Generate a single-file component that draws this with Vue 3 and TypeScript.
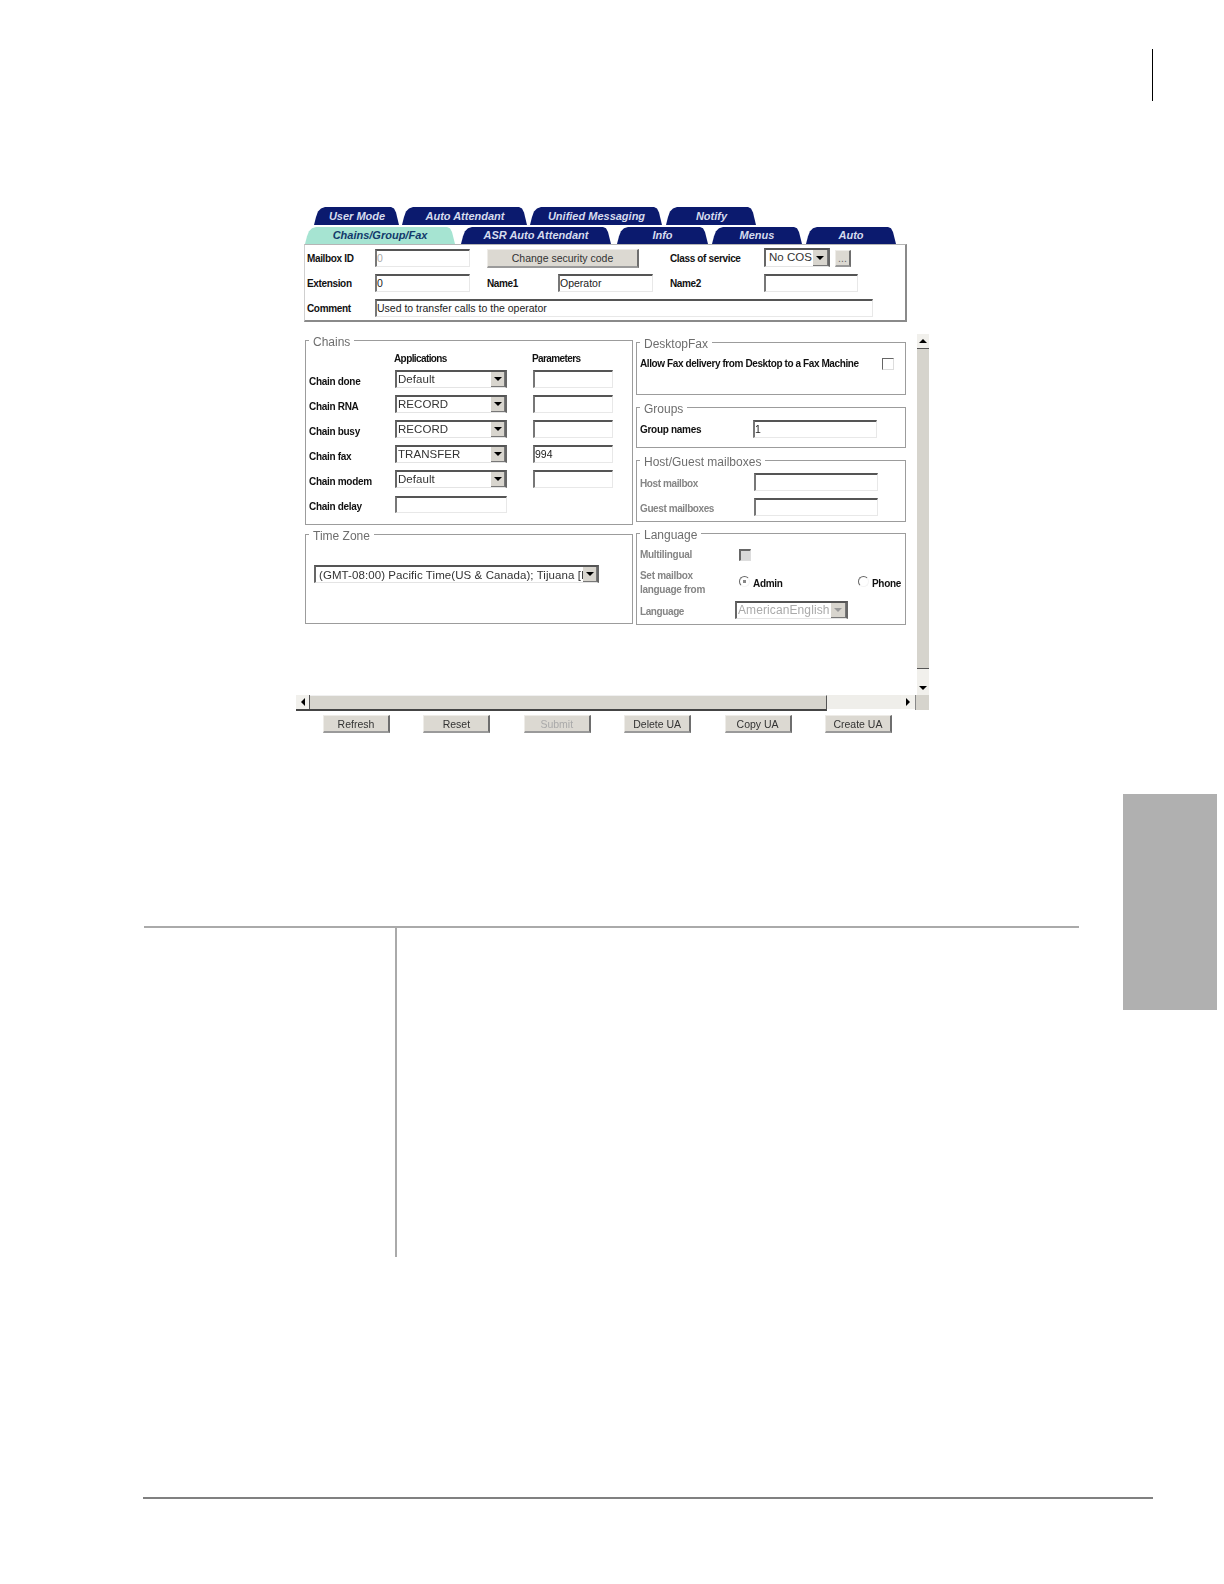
<script setup lang="ts">
interface Tab { label: string; width: number; gap: number; active?: boolean }
const upperTabs: Tab[] = [
  { label: 'User Mode', width: 86, gap: 0 },
  { label: 'Auto Attendant', width: 126, gap: 2 },
  { label: 'Unified Messaging', width: 133, gap: 2 },
  { label: 'Notify', width: 91, gap: 3 },
]
const lowerTabs: Tab[] = [
  { label: 'Chains/Group/Fax', width: 151, gap: 0, active: true },
  { label: 'ASR Auto Attendant', width: 151, gap: 5 },
  { label: 'Info', width: 92, gap: 5 },
  { label: 'Menus', width: 91, gap: 3 },
  { label: 'Auto', width: 91, gap: 3 },
]
const chains = [
  { label: 'Chain done', app: 'Default', param: '' },
  { label: 'Chain RNA', app: 'RECORD', param: '' },
  { label: 'Chain busy', app: 'RECORD', param: '' },
  { label: 'Chain fax', app: 'TRANSFER', param: '994' },
  { label: 'Chain modem', app: 'Default', param: '' },
]
const actions = ['Refresh', 'Reset', 'Submit', 'Delete UA', 'Copy UA', 'Create UA']
</script>

<template>
  <div class="page">
    <div class="crop-bar"></div>
    <div class="side-thumb"></div>

    <section class="window">
      <div class="tab-row upper">
        <div v-for="t in upperTabs" :key="t.label" class="tab" :style="{ width: t.width + 'px', marginLeft: t.gap + 'px' }">{{ t.label }}</div>
      </div>
      <div class="tab-row lower">
        <div v-for="t in lowerTabs" :key="t.label" class="tab" :class="{ active: t.active }" :style="{ width: t.width + 'px', marginLeft: t.gap + 'px' }">{{ t.label }}</div>
      </div>

      <div class="panel">
        <label class="lbl first">Mailbox ID</label>
        <input class="field w95 muted" value="0" readonly />
        <button class="btn security">Change security code</button>
        <label class="lbl">Class of service</label>
        <div class="cos">
          <div class="sel cos-sel"><span>No COS</span><i class="arrow-btn"><b></b></i></div>
          <button class="btn dots">...</button>
        </div>

        <label class="lbl first">Extension</label>
        <input class="field w95" value="0" readonly />
        <label class="lbl">Name1</label>
        <input class="field w95" value="Operator" readonly />
        <label class="lbl">Name2</label>
        <input class="field w94" readonly />

        <label class="lbl first">Comment</label>
        <input class="field comment" value="Used to transfer calls to the operator" readonly />
      </div>

      <div class="main">
        <div class="col-left">
          <fieldset class="fs chains">
            <legend>Chains</legend>
            <div class="chains-grid">
              <span></span>
              <span class="lbl head">Applications</span>
              <span class="lbl head">Parameters</span>
              <template v-for="c in chains" :key="c.label">
                <label class="lbl chain-lbl">{{ c.label }}</label>
                <div class="sel app"><span>{{ c.app }}</span><i class="arrow-btn"><b></b></i></div>
                <input class="field param" :value="c.param" readonly />
              </template>
              <label class="lbl chain-lbl">Chain delay</label>
              <input class="field delay" readonly />
            </div>
          </fieldset>
          <fieldset class="fs zone">
            <legend>Time Zone</legend>
            <div class="sel zone-sel"><span>(GMT-08:00) Pacific Time(US &amp; Canada); Tijuana [I</span><i class="arrow-btn"><b></b></i></div>
          </fieldset>
        </div>

        <div class="col-right">
          <fieldset class="fs desktop">
            <legend>DesktopFax</legend>
            <div class="desktop-row">
              <label class="lbl fax-lbl">Allow Fax delivery from Desktop to a Fax Machine</label>
              <i class="check"></i>
            </div>
          </fieldset>
          <fieldset class="fs groups">
            <legend>Groups</legend>
            <div class="pair-grid group-grid">
              <label class="lbl nudge">Group names</label>
              <input class="field w124" value="1" readonly />
            </div>
          </fieldset>
          <fieldset class="fs host">
            <legend>Host/Guest mailboxes</legend>
            <div class="pair-grid host-grid">
              <label class="lbl dim host-lbl">Host mailbox</label>
              <input class="field w124" readonly />
              <label class="lbl dim host-lbl">Guest mailboxes</label>
              <input class="field w124" readonly />
            </div>
          </fieldset>
          <fieldset class="fs language">
            <legend>Language</legend>
            <div class="lang-grid">
              <label class="lbl dim">Multilingual</label>
              <i class="check disabled"></i>
              <label class="lbl dim two-line">Set mailbox<br />language from</label>
              <div class="radios">
                <span class="radio-item"><i class="radio on"></i><b>Admin</b></span>
                <span class="radio-item"><i class="radio"></i><b>Phone</b></span>
              </div>
              <label class="lbl dim lang-lbl">Language</label>
              <div class="sel lang-sel"><span>AmericanEnglish</span><i class="arrow-btn off"><b></b></i></div>
            </div>
          </fieldset>
        </div>

        <div class="vscroll">
          <i class="sb-btn"><b class="up"></b></i>
          <div class="v-thumb"></div>
          <div class="v-track"></div>
          <i class="sb-btn"><b class="down"></b></i>
        </div>
      </div>

      <div class="hscroll">
        <i class="sb-btn wide"><b class="left"></b></i>
        <div class="h-thumb"></div>
        <div class="h-track"></div>
        <i class="sb-btn wide"><b class="right"></b></i>
        <div class="h-corner"></div>
      </div>

      <div class="actions">
        <button v-for="a in actions" :key="a" class="btn action" :class="{ disabled: a === 'Submit' }">{{ a }}</button>
      </div>
    </section>

    <div class="rule-table"><div class="rule-v"></div></div>
    <div class="rule-foot"></div>
  </div>
</template>

<style>
html, body { margin: 0; background: #fff; }
</style>

<style scoped>
.page {
  position: relative;
  width: 1224px;
  height: 1584px;
  overflow: hidden;
  background: #fff;
  font-family: "Liberation Sans", Arial, sans-serif;
  display: flow-root;
}
.crop-bar { margin: 49px 0 0 1152px; width: 1.4px; height: 52px; background: #000; }
.side-thumb { position: absolute; left: 1123px; top: 794px; width: 94px; height: 216px; background: #b0b0b0; }

.window { margin: 106px 0 0 296px; width: 633px; filter: blur(0.45px); }

.tab-row { display: flex; }
.upper { height: 18px; padding-left: 18px; margin-bottom: 2px; }
.lower { height: 17px; padding-left: 9px; }
.tab {
  box-sizing: border-box;
  background: #0b1a6e;
  color: #d6dcee;
  font: italic bold 11px/18px "Liberation Sans", Arial, sans-serif;
  text-align: center;
  clip-path: polygon(0 100%, 2px 55%, 4px 25%, 7px 8%, 11px 0, calc(100% - 9px) 0, calc(100% - 6px) 8%, calc(100% - 4px) 30%, calc(100% - 1px) 100%);
}
.lower .tab { line-height: 16px; padding-right: 1px; }
.tab.active { background: #a6e4d2; color: #123a6b; }

.panel {
  box-sizing: border-box;
  margin-left: 8px;
  width: 603px;
  height: 78px;
  padding-top: 4px;
  background: #fff;
  border-top: 1px solid #b5b5b5;
  border-left: 1px solid #cfcfcf;
  border-right: 2px solid #8a8a8a;
  border-bottom: 2px solid #8a8a8a;
  display: grid;
  grid-template-columns: 70px 112px 71px 112px 94px 1fr;
  grid-template-rows: 18px 18px 18px;
  row-gap: 7px;
  align-items: center;
}

.lbl {
  font: bold 10px/14px "Liberation Sans", Arial, sans-serif;
  letter-spacing: -0.3px;
  color: #111;
  white-space: nowrap;
}
.panel > .lbl { padding-top: 2px; letter-spacing: -0.35px; }
.panel > .first { padding-left: 2px; }
.dim { color: #858585; }
.nudge { padding-top: 1px; }
.chain-lbl { padding-top: 5px; }
.host-lbl { padding-top: 4px; letter-spacing: -0.4px; }
.lang-lbl { padding-top: 5px; letter-spacing: -0.4px; }
.fax-lbl { letter-spacing: -0.4px; }

.field {
  box-sizing: border-box;
  height: 18px;
  padding: 0 0 2px 0;
  margin: 0;
  background: #fff;
  border-style: solid;
  border-width: 2px 1px 1px 2px;
  border-color: #555 #e8e8e8 #e8e8e8 #777;
  font: 10.5px "Liberation Sans", Arial, sans-serif;
  color: #222;
  outline: none;
  border-radius: 0;
}
.muted { color: #aaa; }
.w95 { width: 95px; }
.w94 { width: 94px; }
.w124 { width: 124px; }
.comment { grid-column: 2 / 7; width: 498px; }

.btn {
  box-sizing: border-box;
  margin: 0;
  padding: 0;
  background: #dcd9d2;
  border-top: 1px solid #eeece8;
  border-left: 1px solid #eeece8;
  border-right: 2px solid #6e6e6e;
  border-bottom: 2px solid #9a9a9a;
  font: 10.5px "Liberation Sans", Arial, sans-serif;
  color: #333;
}
.security { grid-column: 3 / 5; width: 152px; height: 19px; }
.cos { display: flex; gap: 5px; align-items: flex-start; margin-top: -1px; }
.dots { width: 16px; height: 17px; margin-top: 2px; color: #666; line-height: 10px; }

.sel {
  box-sizing: border-box;
  height: 18px;
  display: flex;
  align-items: center;
  background: #fff;
  border-style: solid;
  border-width: 2px 2px 1px 2px;
  border-color: #555 #666 #e4e4e4 #666;
  font: 11.5px "Liberation Sans", Arial, sans-serif;
  color: #333;
  padding-left: 1px;
  white-space: nowrap;
}
.sel span { flex: 1; min-width: 0; padding-bottom: 2px; }
.arrow-btn {
  flex: none;
  width: 14px;
  height: 100%;
  background: #d8d5ce;
  border-right: 1px solid #777;
  border-bottom: 1px solid #777;
  box-sizing: border-box;
  display: flex;
  align-items: center;
  justify-content: center;
}
.arrow-btn b { width: 0; height: 0; border: 4px solid transparent; border-top: 4px solid #000; border-bottom: 0; }
.arrow-btn.off b { border-top-color: #999; }
.cos-sel { width: 66px; height: 19px; font-size: 11.5px; padding-left: 3px; }
.cos-sel .arrow-btn { width: 15px; }
.app { width: 112px; letter-spacing: 0.05px; }
.param { width: 80px; }
.delay { width: 112px; height: 17px; }

.main { display: flex; height: 362px; margin-top: 11px; padding-left: 9px; box-sizing: border-box; }
.col-left { width: 328px; }
.col-right { width: 270px; margin-left: 3px; padding-top: 2px; }

.fs {
  box-sizing: border-box;
  margin: 0;
  padding: 0;
  min-width: 0;
  width: 100%;
  border: 1px solid #9c9c9c;
}
.fs legend {
  position: relative;
  top: 1.5px;
  margin-left: 3px;
  padding: 0 4px;
  font: 12px/14px "Liberation Sans", Arial, sans-serif;
  color: #6e6e6e;
}
.chains { height: 192px; }
.zone { height: 97px; margin-top: 2px; }
.desktop { height: 60px; }
.groups { height: 48px; margin-top: 5px; }
.host { height: 69px; margin-top: 5px; }
.language { height: 99px; margin-top: 4px; }

.chains-grid {
  display: grid;
  grid-template-columns: 86px 138px 1fr;
  grid-template-rows: 9px repeat(6, 18px);
  row-gap: 7px;
  padding: 7px 0 0 3px;
  align-items: center;
}
.head { letter-spacing: -0.6px; margin-left: -1px; }

.zone-sel { width: 285px; margin: 24px 0 0 8px; padding-left: 3px; }
.zone-sel span { padding-bottom: 0; letter-spacing: 0.08px; }

.desktop-row { display: flex; justify-content: space-between; align-items: center; padding: 8px 11px 0 3px; }
.check {
  display: block;
  box-sizing: border-box;
  width: 12px;
  height: 12px;
  background: #fff;
  border-style: solid;
  border-width: 1px;
  border-color: #666 #ddd #ddd #666;
}
.check.disabled { background: #d9d9d9; border-width: 2px 1px 1px 2px; margin-left: 4px; }

.pair-grid { display: grid; grid-template-columns: 113px 1fr; padding-left: 3px; align-items: center; }
.group-grid { padding-top: 6px; }
.host-grid { grid-template-columns: 114px 1fr; row-gap: 7px; padding-top: 6px; }

.lang-grid {
  display: grid;
  grid-template-columns: 95px 1fr;
  grid-template-rows: 14px 28px 18px;
  row-gap: 5px;
  padding: 8px 0 0 3px;
  align-items: center;
}
.two-line { padding-top: 3px; }
.radios { display: grid; grid-template-columns: 119px 1fr; padding: 5px 0 0 4px; }
.radio-item { display: flex; align-items: center; gap: 3px; }
.radio-item b { font: bold 10px/14px "Liberation Sans", Arial, sans-serif; letter-spacing: -0.3px; color: #111; padding-top: 1px; }
.radio {
  box-sizing: border-box;
  width: 11px;
  height: 11px;
  border-radius: 50%;
  border: 1.5px solid #f4f4f4;
  border-top-color: #666;
  border-left-color: #666;
  background: #fff;
  margin-top: -4px;
  display: block;
}
.radio.on { background: radial-gradient(circle, #888 0 1.5px, #fff 2px); }
.lang-sel { width: 113px; color: #aaa; margin-top: 2px; font-size: 12px; letter-spacing: 0.1px; }
.lang-sel .arrow-btn { width: 15px; }

.vscroll { margin: 1px 0 0 11px; width: 12px; display: flex; flex-direction: column; }
.sb-btn {
  flex: none;
  height: 14px;
  background: #f1f0ec;
  display: flex;
  align-items: center;
  justify-content: center;
}
.sb-btn b { width: 0; height: 0; border: 4px solid transparent; }
.sb-btn .up { border-bottom: 4px solid #000; border-top: 0; }
.sb-btn .down { border-top: 4px solid #000; border-bottom: 0; }
.sb-btn .left { border-right: 4px solid #000; border-left: 0; }
.sb-btn .right { border-left: 4px solid #000; border-right: 0; }
.v-thumb { flex: none; height: 321px; background: #d6d4cd; border-top: 1px solid #555; border-bottom: 1.5px solid #555; box-sizing: border-box; }
.v-track { flex: 1; background: #f1f0ec; }

.hscroll { display: flex; height: 16px; }
.hscroll .wide { width: 14px; height: 14px; }
.hscroll .wide:first-child { border-right: 1.5px solid #555; box-sizing: border-box; box-shadow: 0 2px 0 #444; }
.h-thumb { width: 517px; background: #d6d4cd; border-top: 1px solid #f0f0f0; border-right: 1px solid #555; border-bottom: 2px solid #444; box-sizing: border-box; }
.h-track { width: 74px; height: 14px; background: #efeeea; }
.h-corner { width: 14px; height: 15px; background: #d6d4cd; border-left: 1px solid #888; box-sizing: border-box; }

.actions { display: flex; justify-content: space-between; margin: 4px 37px 0 27px; }
.action { width: 67px; height: 18px; padding-top: 1px; }
.action.disabled { color: #aaa; }

.rule-table { margin: 193px 0 0 144px; width: 935px; border-top: 2px solid #aaa; }
.rule-v { margin-left: 251px; width: 2px; height: 329px; background: #aaa; }
.rule-foot { margin: 240px 0 0 143px; width: 1010px; height: 2px; background: #808080; }
</style>
